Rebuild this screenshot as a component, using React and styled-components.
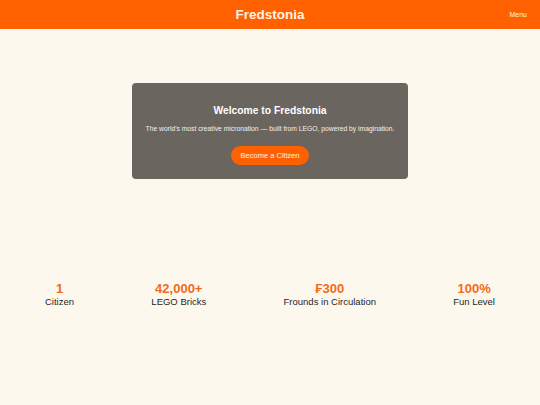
import React from "react";
import styled, { createGlobalStyle } from "styled-components";

const GlobalStyle = createGlobalStyle`
  html, body {
    margin: 0;
    padding: 0;
    background: #fdf8ee;
    font-family: "Liberation Sans", Arial, sans-serif;
  }
`;

const Page = styled.div`
  width: 540px;
  min-height: 405px;
  background: #fdf8ee;
`;

const Header = styled.header`
  height: 29px;
  background: #ff6100;
  display: flex;
  align-items: center;
  justify-content: center;
  position: relative;
`;

const Brand = styled.h1`
  margin: 0;
  font-size: 13.5px;
  font-weight: 700;
  color: #fdf3e6;
`;

const MenuLink = styled.a`
  position: absolute;
  right: 13px;
  top: 11px;
  font-size: 7px;
  color: #fdf3e6;
`;

const Main = styled.main`
  display: flex;
  flex-direction: column;
  align-items: center;
  padding-top: 54px;
`;

const Hero = styled.section`
  width: 276px;
  height: 96px;
  box-sizing: border-box;
  background: #6b6560;
  border-radius: 4px;
  display: flex;
  flex-direction: column;
  align-items: center;
  padding-top: 22px;
`;

const HeroTitle = styled.h2`
  margin: 0;
  font-size: 10.3px;
  font-weight: 700;
  color: #ffffff;
`;

const HeroText = styled.p`
  margin: 9px 0 0;
  font-size: 6.75px;
  color: #f2f0ee;
`;

const CitizenButton = styled.button`
  margin-top: 14px;
  width: 78px;
  height: 19px;
  padding: 0;
  border: none;
  border-radius: 10px;
  background: #ff6100;
  color: #fdf3e6;
  font-family: inherit;
  font-size: 7.5px;
`;

const Stats = styled.section`
  width: 100%;
  box-sizing: border-box;
  display: flex;
  justify-content: space-between;
  padding: 0 45px;
  margin-top: 102px;
`;

const Stat = styled.div`
  display: flex;
  flex-direction: column;
  align-items: center;
`;

const StatValue = styled.div`
  font-size: 13px;
  font-weight: 700;
  color: #f26a1b;
  line-height: 15px;
`;

const StatLabel = styled.div`
  font-size: 9.5px;
  color: #1e1e1e;
  line-height: 12px;
`;

const stats = [
  { value: "1", label: "Citizen" },
  { value: "42,000+", label: "LEGO Bricks" },
  { value: "₣300", label: "Frounds in Circulation" },
  { value: "100%", label: "Fun Level" },
];

export default function App() {
  return (
    <Page>
      <GlobalStyle />
      <Header>
        <Brand>Fredstonia</Brand>
        <MenuLink>Menu</MenuLink>
      </Header>
      <Main>
        <Hero>
          <HeroTitle>Welcome to Fredstonia</HeroTitle>
          <HeroText>
            The world's most creative micronation — built from LEGO, powered by imagination.
          </HeroText>
          <CitizenButton>Become a Citizen</CitizenButton>
        </Hero>
        <Stats>
          {stats.map((s) => (
            <Stat key={s.label}>
              <StatValue>{s.value}</StatValue>
              <StatLabel>{s.label}</StatLabel>
            </Stat>
          ))}
        </Stats>
      </Main>
    </Page>
  );
}
